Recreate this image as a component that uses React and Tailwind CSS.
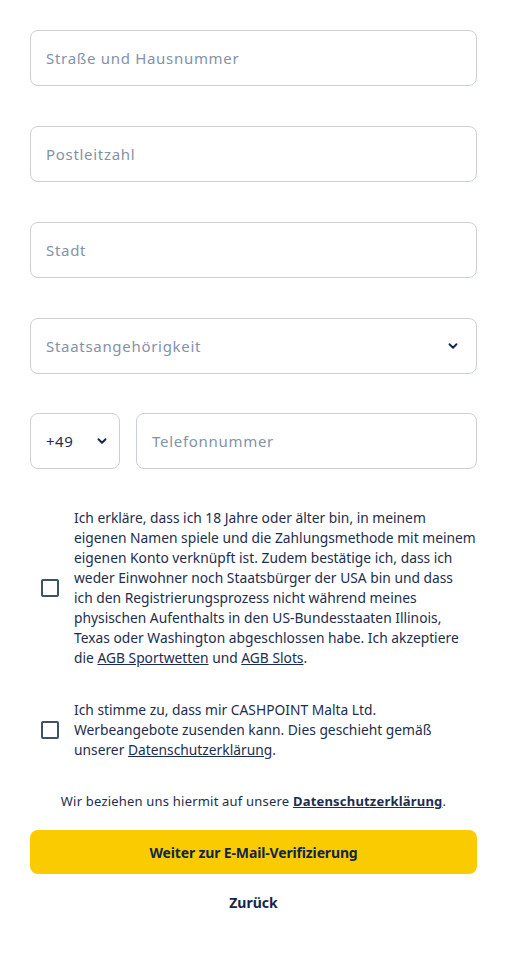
import React from 'react';

const font = { fontFamily: '"Noto Sans", "Open Sans", sans-serif' };

function Chevron() {
  return (
    <svg width="14" height="14" viewBox="0 0 24 24" fill="none" stroke="#12264a" strokeWidth="3.2" strokeLinecap="round" strokeLinejoin="round">
      <path d="M6 9l6 6 6-6" />
    </svg>
  );
}

function Field({ label, select }) {
  return (
    <div className="flex h-14 items-center justify-between rounded-lg border border-[#c9d0dc] bg-white pl-[15px] pr-4">
      <span className="text-[15px] tracking-[0.7px] text-[#8492a8]">{label}</span>
      {select && <Chevron />}
    </div>
  );
}

function Check({ children }) {
  return (
    <div className="flex items-center gap-[15px] pl-[11px]">
      <div className="h-[18px] w-[18px] shrink-0 rounded-[2px] border-2 border-[#3d506c]" />
      <p className="-mr-3 text-[13.8px] leading-5 text-[#1d2d4d]">{children}</p>
    </div>
  );
}

export default function App() {
  return (
    <div className="min-h-screen bg-white px-[30px] pt-[30px] pb-10" style={font}>
      <div className="flex flex-col gap-10">
        <Field label="Straße und Hausnummer" />
        <Field label="Postleitzahl" />
        <Field label="Stadt" />
        <Field label="Staatsangehörigkeit" select />
        <div className="-mt-[1px] flex gap-4">
          <div className="flex h-14 w-[90px] items-center justify-between rounded-lg border border-[#c9d0dc] pl-[15px] pr-[10px]">
            <span className="text-[15px] tracking-[0.5px] text-[#1d2d4d]">+49</span>
            <Chevron />
          </div>
          <div className="flex h-14 flex-1 items-center rounded-lg border border-[#c9d0dc] px-[15px]">
            <span className="text-[15px] tracking-[0.7px] text-[#8492a8]">Telefonnummer</span>
          </div>
        </div>
      </div>

      <div className="mt-[39px] flex flex-col gap-[32px]">
        <Check>
          Ich erkläre, dass ich 18 Jahre oder älter bin, in meinem<br />
          eigenen Namen spiele und die Zahlungsmethode mit meinem<br />
          eigenen Konto verknüpft ist. Zudem bestätige ich, dass ich<br />
          weder Einwohner noch Staatsbürger der USA bin und dass<br />
          ich den Registrierungsprozess nicht während meines<br />
          physischen Aufenthalts in den US-Bundesstaaten Illinois,<br />
          Texas oder Washington abgeschlossen habe. Ich akzeptiere<br />
          die <span className="underline">AGB Sportwetten</span> und <span className="underline">AGB Slots</span>.
        </Check>
        <Check>
          Ich stimme zu, dass mir CASHPOINT Malta Ltd.<br />
          Werbeangebote zusenden kann. Dies geschieht gemäß<br />
          unserer <span className="underline">Datenschutzerklärung</span>.
        </Check>
      </div>

      <p className="mt-[31px] text-center text-[13px] leading-5 tracking-[0.2px] text-[#1d2d4d]">
        Wir beziehen uns hiermit auf unsere <span className="font-bold underline">Datenschutzerklärung</span>.
      </p>

      <button className="mt-[19px] flex h-11 w-full items-center justify-center rounded-lg bg-[#facb00] text-[14px] font-bold tracking-[-0.15px] text-[#12264a]">
        Weiter zur E-Mail-Verifizierung
      </button>

      <div className="mt-[18px] text-center text-[14px] font-bold text-[#12264a]">Zurück</div>
    </div>
  );
}
